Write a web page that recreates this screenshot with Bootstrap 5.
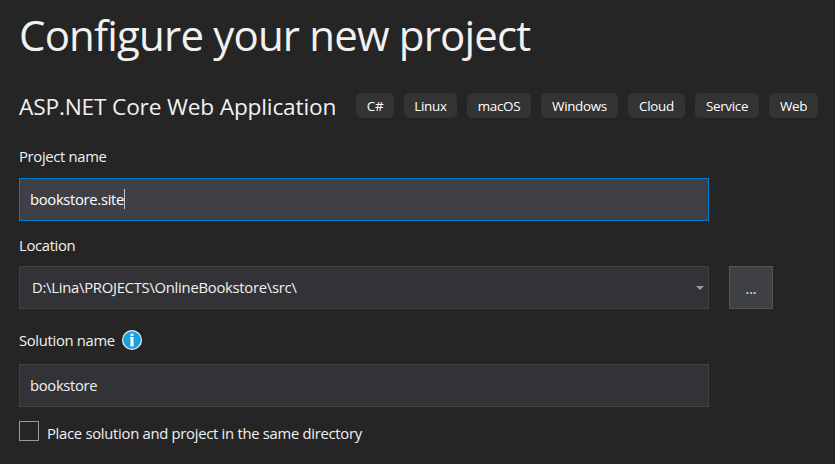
<!DOCTYPE html>
<html lang="en" data-bs-theme="dark">
<head>
<meta charset="utf-8">
<meta name="viewport" content="width=device-width, initial-scale=1">
<title>Configure your new project</title>
<link href="https://cdn.jsdelivr.net/npm/bootstrap@5.3.0/dist/css/bootstrap.min.css" rel="stylesheet">
<style>
body{background:#252526;color:#f1f1f1;font-family:"Open Sans","Noto Sans",sans-serif;font-size:14.8px;line-height:20px;letter-spacing:-.32px;overflow:hidden}
.page{padding-left:19px;width:835px;height:464px}
.page-title{font-size:42px;line-height:58px;height:93px;padding-top:6px;letter-spacing:-.82px;color:#f1f1f1;white-space:nowrap}
.template-name{font-size:22.7px;line-height:28px;height:25px;width:337px;letter-spacing:-.18px;color:#f1f1f1;white-space:nowrap}
.tags{gap:10px}
.tag{height:25px;border-radius:5px;background:#333334;color:#fff;font-size:13.4px;line-height:26px;letter-spacing:-.3px;text-align:center;white-space:nowrap}
.t1{width:38px}.t2{width:53px}.t3{width:64px}.t4{width:77px}.t5{width:57px}.t6{width:64px}.t7{width:49px}
.field-label{height:20px;white-space:nowrap}
.field{width:690px;height:43px;border:1px solid #434346;background:#333337;padding:0 10px 2px;white-space:nowrap}
.field-active{border-color:#007acc;background:#3f3f46;color:#fff}
.field-combo{padding:0 4px 2px 12px;letter-spacing:-.26px}
.caret{width:1px;height:20px;background:#c8c8c8}
.arrow{margin-top:2px}
.browse{width:44px;height:43px;margin-left:20px;border:1px solid #555558;background:#3f3f46;border-radius:0;padding:2px 0 0;font-size:14px;color:#f1f1f1}
.check{width:20px;height:20px;border:1px solid #999;margin-right:8px}
.place{padding-top:2px;letter-spacing:-.28px}
.g1{margin-top:28px}.g2{margin-top:12px}.g3{margin-top:14px}.g4{margin-top:11px}.g5{margin-top:21px}.g6{margin-top:14px}.g7{margin-top:14px}
.info{margin-left:7px}
</style>
<script src="https://cdn.jsdelivr.net/npm/bootstrap@5.3.0/dist/js/bootstrap.bundle.min.js"></script>
</head>
<body>
<main class="page">
  <h1 class="page-title fw-normal m-0">Configure your new project</h1>
  <div class="d-flex align-items-start">
    <h2 class="template-name fw-normal m-0 flex-shrink-0">ASP.NET Core Web Application</h2>
    <div class="tags d-flex">
      <span class="tag t1">C#</span><span class="tag t2">Linux</span><span class="tag t3">macOS</span><span class="tag t4">Windows</span><span class="tag t5">Cloud</span><span class="tag t6">Service</span><span class="tag t7">Web</span>
    </div>
  </div>
  <div class="field-label g1">Project name</div>
  <div class="field field-active g2 d-flex align-items-center"><span>bookstore.site</span><i class="caret"></i></div>
  <div class="field-label g3">Location</div>
  <div class="d-flex g4">
    <div class="field field-combo d-flex align-items-center justify-content-between"><span>D:\Lina\PROJECTS\OnlineBookstore\src\</span>
      <svg class="arrow" width="8" height="4" viewBox="0 0 8 4"><path d="M0 0h8L4 4z" fill="#999"/></svg></div>
    <button class="btn browse" type="button">...</button>
  </div>
  <div class="field-label d-flex align-items-center g5"><span>Solution name</span>
    <svg class="info" width="20" height="20" viewBox="0 0 20 20"><circle cx="10" cy="10" r="9.4" fill="#1ba1e2" stroke="#f1f1f1" stroke-width="1.2"/><path d="M8.5 3.8h3v2.2h-3zM8 7h3.5v8.3h.5v1H8v-1h.5V8H8z" fill="#fff"/></svg></div>
  <div class="field g6 d-flex align-items-center"><span>bookstore</span></div>
  <div class="d-flex g7"><span class="check"></span><label class="place">Place solution and project in the same directory</label></div>
</main>
</body>
</html>
